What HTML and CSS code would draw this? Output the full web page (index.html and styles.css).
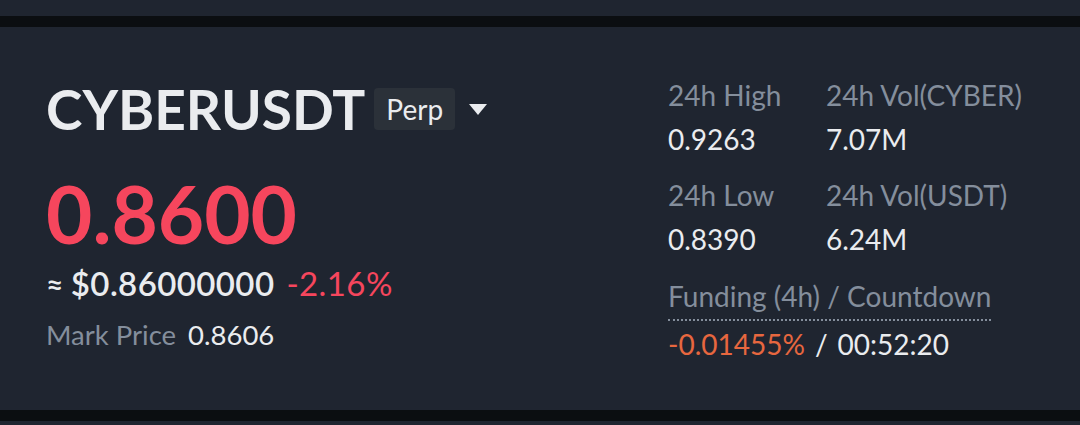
FILE: index.html
```html
<!DOCTYPE html>
<html>
<head>
<meta charset="utf-8">
<link rel="stylesheet" href="styles.css">
</head>
<body>
<div class="strip strip-top"></div>
<section class="card">
  <div class="left">
    <div class="title-row">
      <h1 class="symbol">CYBERUSDT</h1>
      <span class="badge">Perp</span>
      <svg class="caret" width="20" height="13" viewBox="0 0 20 13"><path d="M1 1h18l-9 11z" fill="#eaecef"/></svg>
    </div>
    <div class="price">0.8600</div>
    <div class="usd-row"><span class="approx">≈</span><span class="usd">$0.86000000</span><span class="change">-2.16%</span></div>
    <div class="mark-row"><span class="label">Mark Price</span><span class="mark">0.8606</span></div>
  </div>
  <div class="right">
    <div class="stats">
      <div class="stat"><div class="label">24h High</div><div class="value">0.9263</div></div>
      <div class="stat"><div class="label">24h Vol(CYBER)</div><div class="value">7.07M</div></div>
      <div class="stat"><div class="label">24h Low</div><div class="value">0.8390</div></div>
      <div class="stat"><div class="label">24h Vol(USDT)</div><div class="value">6.24M</div></div>
    </div>
    <div class="funding">
      <div class="label funding-label">Funding (4h) / Countdown</div>
      <div class="value"><span class="rate">-0.01455%</span><span class="sep">/</span><span>00:52:20</span></div>
    </div>
  </div>
</section>
<div class="strip strip-bottom"></div>
</body>
</html>
```

FILE: styles.css
```css
html, body {
  margin: 0;
  padding: 0;
  background: #0b0e11;
  height: 425px;
  overflow: hidden;
  font-family: Lato, "Open Sans", sans-serif;
  color: #eaecef;
}
.strip {
  background: #1f2530;
}
.strip-top {
  height: 16px;
  margin-bottom: 11px;
}
.strip-bottom {
  height: 10px;
  margin-top: 11px;
}
.card {
  background: #1f2530;
  height: 383px;
  display: flex;
  box-sizing: border-box;
  padding-left: 46px;
}
.left {
  width: 622px;
  display: flex;
  flex-direction: column;
  padding-top: 60px;
}
.title-row {
  display: flex;
  align-items: center;
  height: 44px;
}
.symbol {
  margin: 0;
  font-size: 55px;
  font-weight: 700;
  line-height: 44px;
  color: #eaecef;
}
.badge {
  margin-left: 9px;
  background: #2b3139;
  border-radius: 4px;
  height: 42px;
  line-height: 42px;
  padding: 0 12px;
  font-size: 28px;
  color: #eaecef;
}
.caret {
  margin-left: 13px;
}
.price {
  margin-top: 42px;
  font-size: 80px;
  font-weight: 700;
  line-height: 80px;
  color: #f6465d;
}
.usd-row {
  margin-top: 10px;
  font-size: 33px;
  line-height: 40px;
  font-weight: 600;
  letter-spacing: 0.4px;
  display: flex;
  align-items: baseline;
}
.approx {
  font-size: 30px;
  margin-right: 7px;
}
.change {
  margin-left: 12px;
  color: #f6465d;
  font-weight: 400;
}
.mark-row {
  margin-top: 14px;
  font-size: 27.5px;
  line-height: 34px;
}
.label {
  color: #848e9c;
}
.mark {
  margin-left: 12px;
}
.right {
  display: flex;
  flex-direction: column;
  padding-top: 53px;
}
.stats {
  display: grid;
  grid-template-columns: 158px auto;
  row-gap: 26px;
}
.stat .label {
  font-size: 28px;
  line-height: 30px;
}
.stat .value {
  margin-top: 14px;
  font-size: 28px;
  line-height: 30px;
}
.funding {
  margin-top: 27px;
}
.funding-label {
  display: inline-block;
  font-size: 28px;
  line-height: 30px;
  padding-bottom: 8px;
  border-bottom: 2px dotted #848e9c;
}
.funding .value {
  margin-top: 8px;
  font-size: 28px;
  line-height: 30px;
}
.rate {
  color: #e7673f;
}
.sep {
  margin: 0 10px;
}
```
